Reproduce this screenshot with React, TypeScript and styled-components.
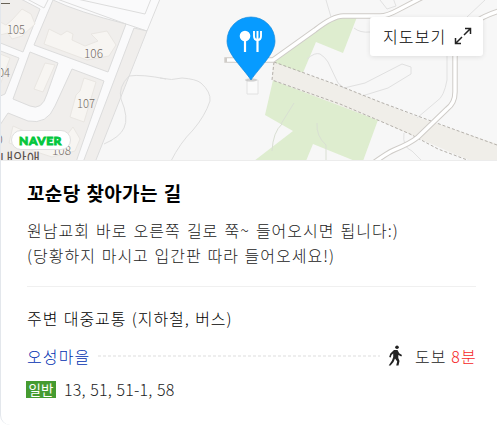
import React from 'react';
import styled, { createGlobalStyle } from 'styled-components';

const Global = createGlobalStyle`
  *, *::before, *::after { box-sizing: border-box; }
  html, body { margin: 0; background: #fff; overflow: hidden; }
  body { font-family: "Noto Sans CJK KR", "Noto Sans", sans-serif; }
`;

const Card = styled.article`
  width: 497px;
  height: 425px;
  overflow: hidden;
  border-left: 1px solid #e3e7ec;
  border-bottom-left-radius: 10px;
  background: #fff;
`;

const MapPanel = styled.section`
  position: relative;
  height: 161px;
  border-bottom: 1px solid #ececec;
  overflow: hidden;
`;

const MapDrawing = styled.svg`
  display: block;
  width: 496px;
  height: 161px;
`;

const MapButton = styled.button`
  position: absolute;
  top: 17px;
  right: 14px;
  width: 113px;
  height: 39px;
  padding: 0 11px 2px 13px;
  display: flex;
  align-items: center;
  justify-content: space-between;
  border: 0;
  border-radius: 3px;
  background: #fff;
  box-shadow: 0 1px 5px rgba(0, 0, 0, 0.1);
  font: 300 16px/24px "Noto Sans CJK KR", sans-serif;
  letter-spacing: 1.1px;
  color: #000;
  white-space: nowrap;
`;

const NaverBadge = styled.span`
  position: absolute;
  left: 10px;
  top: 130px;
  width: 60px;
  height: 20px;
  padding-right: 1px;
  display: flex;
  align-items: center;
  justify-content: center;
  border: 1px solid #dfdfdf;
  border-radius: 11px;
  background: #fff;
  color: #03c73c;
  font: 900 12px/19px Lato, sans-serif;
  letter-spacing: 0.55px;
  -webkit-text-stroke: 0.9px #03c73c;
`;

const Body = styled.div`
  padding: 18px 21px 0 26px;
`;

const Title = styled.h2`
  margin: 0;
  height: 28px;
  font-size: 19px;
  line-height: 28px;
  font-weight: 700;
  letter-spacing: 0.35px;
  word-spacing: 1.3px;
  color: #000;
  white-space: nowrap;
`;

const Directions = styled.div`
  margin-top: 11px;
  padding-bottom: 18px;
  border-bottom: 1px solid #f0f0f0;
`;

const Line = styled.p<{ $wordGap: number }>`
  margin: 0;
  font-size: 16px;
  line-height: 25px;
  font-weight: 300;
  letter-spacing: 1px;
  word-spacing: ${({ $wordGap }) => $wordGap}px;
  color: #222;
  white-space: nowrap;
`;

const Subtitle = styled.h3`
  margin: 19px 0 0;
  font-size: 16px;
  line-height: 25px;
  font-weight: 300;
  letter-spacing: 0.95px;
  word-spacing: 0.9px;
  color: #000;
  white-space: nowrap;
`;

const StopRow = styled.div`
  margin-top: 13px;
  display: flex;
  align-items: center;
  height: 25px;
  font-size: 16px;
  line-height: 25px;
  font-weight: 300;
  letter-spacing: 1.1px;
  white-space: nowrap;
`;

const StopName = styled.span`
  width: 71px;
  flex: none;
  color: #0030b0;
`;

const Dashes = styled.span`
  flex: none;
  width: 282px;
  height: 2px;
  margin-top: -2px;
  background: repeating-linear-gradient(90deg, #eeeeee 0 3px, transparent 3px 5px);
`;

const WalkIcon = styled.svg`
  flex: none;
  width: 15px;
  height: 21px;
  margin-left: 8px;
  margin-top: -2px;
`;

const WalkTime = styled.span`
  margin-left: 12px;
  color: #222;
`;

const Minutes = styled.span`
  color: #f51f1f;
`;

const BusRow = styled.div`
  margin-top: 8px;
  display: flex;
  align-items: center;
  height: 25px;
`;

const BusKind = styled.span`
  width: 30px;
  height: 17px;
  margin-left: -1px;
  background: #459b30;
  color: #fff;
  font-size: 13.5px;
  line-height: 16px;
  font-weight: 400;
  text-align: center;
  white-space: nowrap;
`;

const BusNumbers = styled.span`
  margin-left: 8px;
  font: 300 16px/25px "Noto Sans CJK KR", sans-serif;
  letter-spacing: 0.2px;
  word-spacing: 0.8px;
  color: #222;
  white-space: nowrap;
`;

const DIAGONAL_ROAD = 'M227 60H273L315 30Q333 16 343 16H380Q387 16 398 10L421-2';
const EAST_ROAD =
  'M499 11Q483 16 474 23L461 31Q455 37 455 58V92Q455 103 447 109L418 137Q411 143 394 150 387 153 372 164';

function LocationMap() {
  return (
    <MapDrawing viewBox="1 0 496 161">
      <rect width="497" height="161" fill="#f7f7f7" />
      <path d="M0 0H160L148 31 96 161H0Z" fill="#fafafb" />
      <g fill="#f0eeec" stroke="#dcdcdc" strokeWidth="1">
        <path d="M-2-2H19L40 9 23 52-2 42Z" />
        <path d="M-2 50 19 58 5 94-2 97Z" />
        <path d="M53 0 34 45 108 72 126 24Q78 12 53 0Z" />
        <path d="M30 52 58 63 47 94Q42 111 30 106L13 99Z" />
        <path d="M72 69 104 81 75 165H-2V128L8 113 28 121Q47 125 55 106Z" />
        <path d="M134 28 147 31 94 165H82Z" />
      </g>
      <g fill="none" stroke="#dcdcdc">
        <path d="M57-1 126 24 147 31 160-1M68-3 145 14 151-1M27-1 44 8 49-2" />
        <path d="M129 76Q142 74 166 79" stroke="#dedede" />
        <path d="M129 76Q118 87 121 99 129 118 124 128 120 137 104 144" stroke="#dedede" />
        <path d="M160 78Q172 81 182 78 196 79 201 83 211 92 210 101 205 116 193 130 180 143 171 161" stroke="#dedede" />
      </g>
      <g fill="#f7f5f2" stroke="#e9e6e2">
        <path d="M12 20 22 9 31 14 35 24 22 36 12 39 8 33 0 35V22L6 25Z" />
        <path d="M49 29 61 35 67 31 73 34 72 40 85 46 98 41 91 34 107 31 116 45 109 56 87 60 44 44Z" />
        <path d="M45 63 55 65 43 92 34 89Z" />
        <path d="M84 78 96 82 84 122 70 117 76 95 80 91Z" />
        <path d="M0 54 10 58 0 85ZM13 126 29 133 67 135 73 127 80 139 75 151 52 157 9 143Z" />
      </g>
      <g fill="#deedcf">
        <path d="M274 61 315 30 335 17H357L343 53 316 42 302 75 273 67Z" />
        <path d="M273 80 378 120 363 161H355L313 144 306 161H254L293 131 265 115Z" />
      </g>
      <path d="M273 62 340 86 420 118 497 144V170L459 156 420 139 380 121 272 80Z" fill="#f0eee9" />
      <path d="M307 59Q315 52 320 54 325 57 328 62L338 83 344 88 365 83 402 64 411 67V74L388 88 362 96" fill="none" stroke="#e0e0e0" />
      <path d="M447 56V80Q444 97 437 101L417 118M404 133Q402 147 412 151L422 161M354 28Q360 33 370 32M467 17 485 0M380 0 387 9 396 6 393-2M326 0 331 17" fill="none" stroke="#e1e1e1" />
      <path d="M282 124Q273 132 272 151M317 123Q316 136 326 145V161M294 103 281 124" fill="none" stroke="#d9dfd3" />
      <path d="M274 62 272 80 340 104 380 121 410 134 438 149 470 161M274 62 340 86 380 102 431 121 497 145" fill="none" stroke="#b4b0aa" strokeDasharray="3 2" />
      <g fill="none" strokeLinejoin="round">
        <g stroke="#cfccc8" strokeWidth="5.4">
          <path d={DIAGONAL_ROAD} strokeLinecap="square" />
          <path d={EAST_ROAD} />
        </g>
        <g stroke="#fff" strokeWidth="3.4">
          <path d={DIAGONAL_ROAD} />
          <path d={EAST_ROAD} />
        </g>
      </g>
      <path d="M247 80H258V94H247Z" fill="#fafafa" stroke="#e2e2e2" />
      <g fill="#756c67" fontFamily="Noto Sans CJK KR, sans-serif" fontSize="12.5" fontWeight="300">
        <text x="7" y="34" textLength="18" lengthAdjust="spacingAndGlyphs">105</text>
        <text x="84" y="58" textLength="19" lengthAdjust="spacingAndGlyphs">106</text>
        <text x="77" y="108" textLength="18" lengthAdjust="spacingAndGlyphs">107</text>
        <text x="-8" y="77" textLength="18" lengthAdjust="spacingAndGlyphs">104</text>
        <text x="52" y="155" textLength="19" lengthAdjust="spacingAndGlyphs">108</text>
        <text x="-4" y="144">0</text>
      </g>
      <text x="0" y="164" fontSize="15" fill="#59504b" fontFamily="Noto Sans CJK KR, sans-serif" textLength="40" lengthAdjust="spacingAndGlyphs">내안애</text>
      <path d="M0 3.5H10" stroke="#696357" />
      <ellipse cx="251" cy="80" rx="6" ry="1.8" fill="#000" opacity=".13" />
      <path d="M251 80C243 68 227 54 227 41A24 24 0 0 1 275 41C275 54 259 68 251 80Z" fill="#079bff" stroke="#168bdc" strokeWidth=".7" />
      <circle cx="245" cy="36" r="5.3" fill="#fff" />
      <path d="M245 39V52M257.5 40V52" stroke="#fff" strokeWidth="2.2" />
      <path d="M254 31V36Q254 40 257.5 40T261 36V31M257.5 31V40" fill="none" stroke="#fff" strokeWidth="1.9" />
    </MapDrawing>
  );
}

export default function App() {
  return (
    <>
      <Global />
      <Card>
        <MapPanel>
          <LocationMap />
          <NaverBadge>NAVER</NaverBadge>
          <MapButton>
            지도보기
            <svg width="18" height="18" viewBox="0 0 18 18" fill="none" stroke="#222" strokeWidth="1.5">
              <path d="M11 1.5H16.5V7M16.5 1.5 10 8M1.5 11V16.5H7M1.5 16.5 8 10" />
            </svg>
          </MapButton>
        </MapPanel>
        <Body>
          <Title>꼬순당 찾아가는 길</Title>
          <Directions>
            <Line $wordGap={1.6}>원남교회 바로 오른쪽 길로 쭉~ 들어오시면 됩니다:)</Line>
            <Line $wordGap={1.2}>(당황하지 마시고 입간판 따라 들어오세요!)</Line>
          </Directions>
          <Subtitle>주변 대중교통 (지하철, 버스)</Subtitle>
          <StopRow>
            <StopName>오성마을</StopName>
            <Dashes />
            <WalkIcon viewBox="0 0 15 21">
              <circle cx="9" cy="2.2" r="1.8" fill="#222" />
              <path d="M6 5H9.5L11.2 8.2 14 10 13.3 11.4 10.3 10V13L11.5 16 10.5 20.5H8.2L9.2 16.5 7 13.5 5.5 17 2.5 20.5H.7L4 15.5 5.2 12V8.5L3.5 10 2.7 12.5 1.2 12 2.2 8.7Z" fill="#222" />
            </WalkIcon>
            <WalkTime>도보 <Minutes>8분</Minutes></WalkTime>
          </StopRow>
          <BusRow>
            <BusKind>일반</BusKind>
            <BusNumbers>13, 51, 51-1, 58</BusNumbers>
          </BusRow>
        </Body>
      </Card>
    </>
  );
}
